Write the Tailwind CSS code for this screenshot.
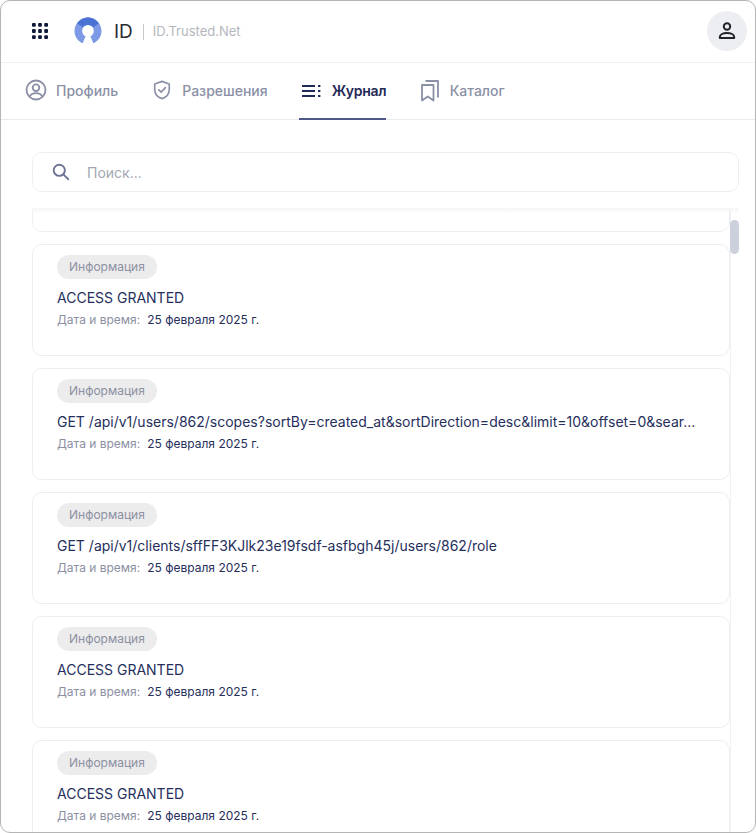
<!DOCTYPE html>
<html lang="ru">
<head>
<meta charset="UTF-8" />
<title>ID.Trusted.Net - Журнал</title>
<script src="https://cdn.jsdelivr.net/npm/@tailwindcss/browser@4"></script>
</head>
<body class="bg-white font-['Inter',sans-serif] text-[#262f5c]">
<div class="w-[756px] h-[833px] border border-[#b5b5b5] rounded-[10px] overflow-hidden bg-white flex flex-col">

  <!-- Header -->
  <header class="h-[62px] shrink-0 flex items-center border-b border-[#eef0f4] pl-[31px] pr-[8px] pb-[2px]">
    <svg width="16" height="16" viewBox="0 0 17 17" fill="#111a3c" class="mr-[26px]">
      <rect x="0" y="0" width="4" height="4" rx="1"/><rect x="6.5" y="0" width="4" height="4" rx="1"/><rect x="13" y="0" width="4" height="4" rx="1"/>
      <rect x="0" y="6.5" width="4" height="4" rx="1"/><rect x="6.5" y="6.5" width="4" height="4" rx="1"/><rect x="13" y="6.5" width="4" height="4" rx="1"/>
      <rect x="0" y="13" width="4" height="4" rx="1"/><rect x="6.5" y="13" width="4" height="4" rx="1"/><rect x="13" y="13" width="4" height="4" rx="1"/>
    </svg>
    <svg width="28" height="27" viewBox="0 0 29 28" class="mr-[12px]">
      <path d="M14.5 0.5C6.8 0.5 0.5 6.8 0.5 14.5C0.5 20.3 4 25.2 9 27.3L12 20C9.9 18.9 8.5 16.8 8.5 14.4C8.5 11 11.2 8.3 14.5 8.3C17.8 8.3 20.5 11 20.5 14.4C20.5 16.8 19.1 18.9 17 20L20 27.3C25 25.2 28.5 20.3 28.5 14.5C28.5 6.8 22.2 0.5 14.5 0.5Z" fill="#7c9ae6"/>
      <path d="M3.2 6.5C5.7 2.9 9.8 0.5 14.5 0.5C19.2 0.5 23.3 2.9 25.8 6.5L20.1 10.6C18.8 9.1 16.8 8.3 14.5 8.3C12.2 8.3 10.2 9.1 8.9 10.6Z" fill="#4a72d4"/>
    </svg>
    <span class="text-[19px] text-[#2b2b33] leading-none mt-[2px]">ID</span>
    <span class="w-px h-[16px] bg-[#c9c9cf] ml-[10px] mr-[9px] mt-[2px]"></span>
    <span class="text-[13px] text-[#b4b7bd] leading-none mt-[2px]">ID.Trusted.Net</span>
    <button class="ml-auto w-[40px] h-[40px] rounded-full bg-[#eceef1] flex items-center justify-center">
      <svg width="20" height="20" viewBox="0 0 20 20" fill="none" stroke="#22242c" stroke-width="2">
        <circle cx="10" cy="5.5" r="3.2"/>
        <path d="M2.8 16.2C2.8 13.6 6 12 10 12C14 12 17.2 13.6 17.2 16.2V17H2.8Z" stroke-linejoin="round"/>
      </svg>
    </button>
  </header>

  <!-- Tabs -->
  <nav class="h-[57px] shrink-0 flex items-stretch border-b border-[#e8eaee] pl-[24px] text-[14px] font-medium text-[#8a90a6]">
    <a class="flex items-center gap-[9px] mr-[34px] pb-[2px]">
      <svg width="22" height="22" viewBox="0 0 22 22" fill="none" stroke="#8a90a6" stroke-width="1.8">
        <circle cx="11" cy="11" r="9.5"/><circle cx="11" cy="8.7" r="3.3"/>
        <path d="M4.6 17.6C5.8 15.2 8.2 14.2 11 14.2C13.8 14.2 16.2 15.2 17.4 17.6"/>
      </svg>
      Профиль
    </a>
    <a class="flex items-center gap-[10px] mr-[31px] pb-[2px]">
      <svg width="20" height="20" viewBox="0 0 20 22" fill="none" stroke="#8a90a6" stroke-width="1.8" stroke-linejoin="round" stroke-linecap="round">
        <path d="M10 1.5L18 4.3V10.5C18 15.3 14.8 18.9 10 20.5C5.2 18.9 2 15.3 2 10.5V4.3Z"/>
        <path d="M6.5 10.8L9 13.3L13.7 8.4"/>
      </svg>
      Разрешения
    </a>
    <a class="relative w-[87px] flex items-center gap-[11px] mr-[34px] text-[#1f2a56] font-semibold pl-[3px] pb-[2px] -mb-px whitespace-nowrap">
      <svg width="19" height="12" viewBox="0 0 19 12" fill="#1f2a56" class="shrink-0">
        <rect x="0" y="0" width="13" height="2"/><rect x="0" y="5" width="13" height="2"/><rect x="0" y="10" width="13" height="2"/>
        <rect x="16" y="0" width="2.4" height="2"/><rect x="16" y="5" width="2.4" height="2"/><rect x="16" y="10" width="2.4" height="2"/>
      </svg>
      <span class="tracking-[-0.02em]">Журнал</span>
      <span class="absolute left-0 right-0 bottom-0 h-[2px] bg-[#4e5785]"></span>
    </a>
    <a class="flex items-center gap-[10px] pb-[2px]">
      <svg width="20" height="23" viewBox="0 0 20 23" fill="none" stroke="#8a90a6" stroke-width="1.8" stroke-linejoin="round">
        <path d="M2 6H13.5V21.5L7.75 17.5L2 21.5Z"/>
        <path d="M5.5 2H18V18.5"/>
      </svg>
      Каталог
    </a>
  </nav>

  <!-- Content -->
  <main class="flex-1 min-h-0 flex flex-col pl-[31px] pr-[16px] pt-[32px]">
    <div class="h-[40px] shrink-0 flex items-center border border-[#eceef2] rounded-[10px] pl-[19px] text-[14px] text-[#a3a7b3]">
      <svg width="18" height="18" viewBox="0 0 21 21" fill="none" stroke="#6d7596" stroke-width="2.2" stroke-linecap="round" class="mr-[17px] -mt-px">
        <circle cx="8.5" cy="8.5" r="6.5"/><path d="M13.5 13.5L19 19"/>
      </svg>
      Поиск...
    </div>

    <div class="relative flex-1 min-h-0 mt-[16px] overflow-hidden">
      <div class="flex flex-col gap-[12px] pr-[9px] -mt-[88px]">
        <div class="h-[112px] shrink-0 border border-[#eceef2] rounded-[10px]"></div>
        <div class="h-[112px] shrink-0 border border-[#eceef2] rounded-[10px] pl-[24px] pr-[28px] pt-[8px]">
          <span class="inline-flex items-center h-[24px] px-[12px] rounded-full bg-[#ececec] text-[12px] text-[#8c90a3]">Информация</span>
          <div class="mt-[9px] text-[14px] leading-[20px] truncate">ACCESS GRANTED</div>
          <div class="mt-[3px] text-[12px] leading-[18px]"><span class="text-[#8c90a3] mr-[7px]">Дата и время:</span><span>25 февраля 2025 г.</span></div>
        </div>
        <div class="h-[112px] shrink-0 border border-[#eceef2] rounded-[10px] pl-[24px] pr-[28px] pt-[8px]">
          <span class="inline-flex items-center h-[24px] px-[12px] rounded-full bg-[#ececec] text-[12px] text-[#8c90a3]">Информация</span>
          <div class="mt-[9px] text-[14px] leading-[20px] truncate">GET /api/v1/users/862/scopes?sortBy=created_at&amp;sortDirection=desc&amp;limit=10&amp;offset=0&amp;sear...</div>
          <div class="mt-[3px] text-[12px] leading-[18px]"><span class="text-[#8c90a3] mr-[7px]">Дата и время:</span><span>25 февраля 2025 г.</span></div>
        </div>
        <div class="h-[112px] shrink-0 border border-[#eceef2] rounded-[10px] pl-[24px] pr-[28px] pt-[8px]">
          <span class="inline-flex items-center h-[24px] px-[12px] rounded-full bg-[#ececec] text-[12px] text-[#8c90a3]">Информация</span>
          <div class="mt-[9px] text-[14px] leading-[20px] truncate">GET /api/v1/clients/sffFF3KJlk23e19fsdf-asfbgh45j/users/862/role</div>
          <div class="mt-[3px] text-[12px] leading-[18px]"><span class="text-[#8c90a3] mr-[7px]">Дата и время:</span><span>25 февраля 2025 г.</span></div>
        </div>
        <div class="h-[112px] shrink-0 border border-[#eceef2] rounded-[10px] pl-[24px] pr-[28px] pt-[8px]">
          <span class="inline-flex items-center h-[24px] px-[12px] rounded-full bg-[#ececec] text-[12px] text-[#8c90a3]">Информация</span>
          <div class="mt-[9px] text-[14px] leading-[20px] truncate">ACCESS GRANTED</div>
          <div class="mt-[3px] text-[12px] leading-[18px]"><span class="text-[#8c90a3] mr-[7px]">Дата и время:</span><span>25 февраля 2025 г.</span></div>
        </div>
        <div class="h-[112px] shrink-0 border border-[#eceef2] rounded-[10px] pl-[24px] pr-[28px] pt-[8px]">
          <span class="inline-flex items-center h-[24px] px-[12px] rounded-full bg-[#ececec] text-[12px] text-[#8c90a3]">Информация</span>
          <div class="mt-[9px] text-[14px] leading-[20px] truncate">ACCESS GRANTED</div>
          <div class="mt-[3px] text-[12px] leading-[18px]"><span class="text-[#8c90a3] mr-[7px]">Дата и время:</span><span>25 февраля 2025 г.</span></div>
        </div>
      </div>
      <!-- top fade of the list -->
      <div class="absolute top-0 left-0 right-0 h-[6px] bg-linear-to-b from-[#f5f5f7] to-transparent"></div>
      <!-- scrollbar -->
      <div class="absolute top-0 bottom-0 right-0 w-[9px] border-l border-[#f0f1f4]"></div>
      <div class="absolute top-[12px] right-0 w-[9px] h-[34px] rounded-full bg-[#ccd0da]"></div>
    </div>
  </main>
</div>
</body>
</html>
